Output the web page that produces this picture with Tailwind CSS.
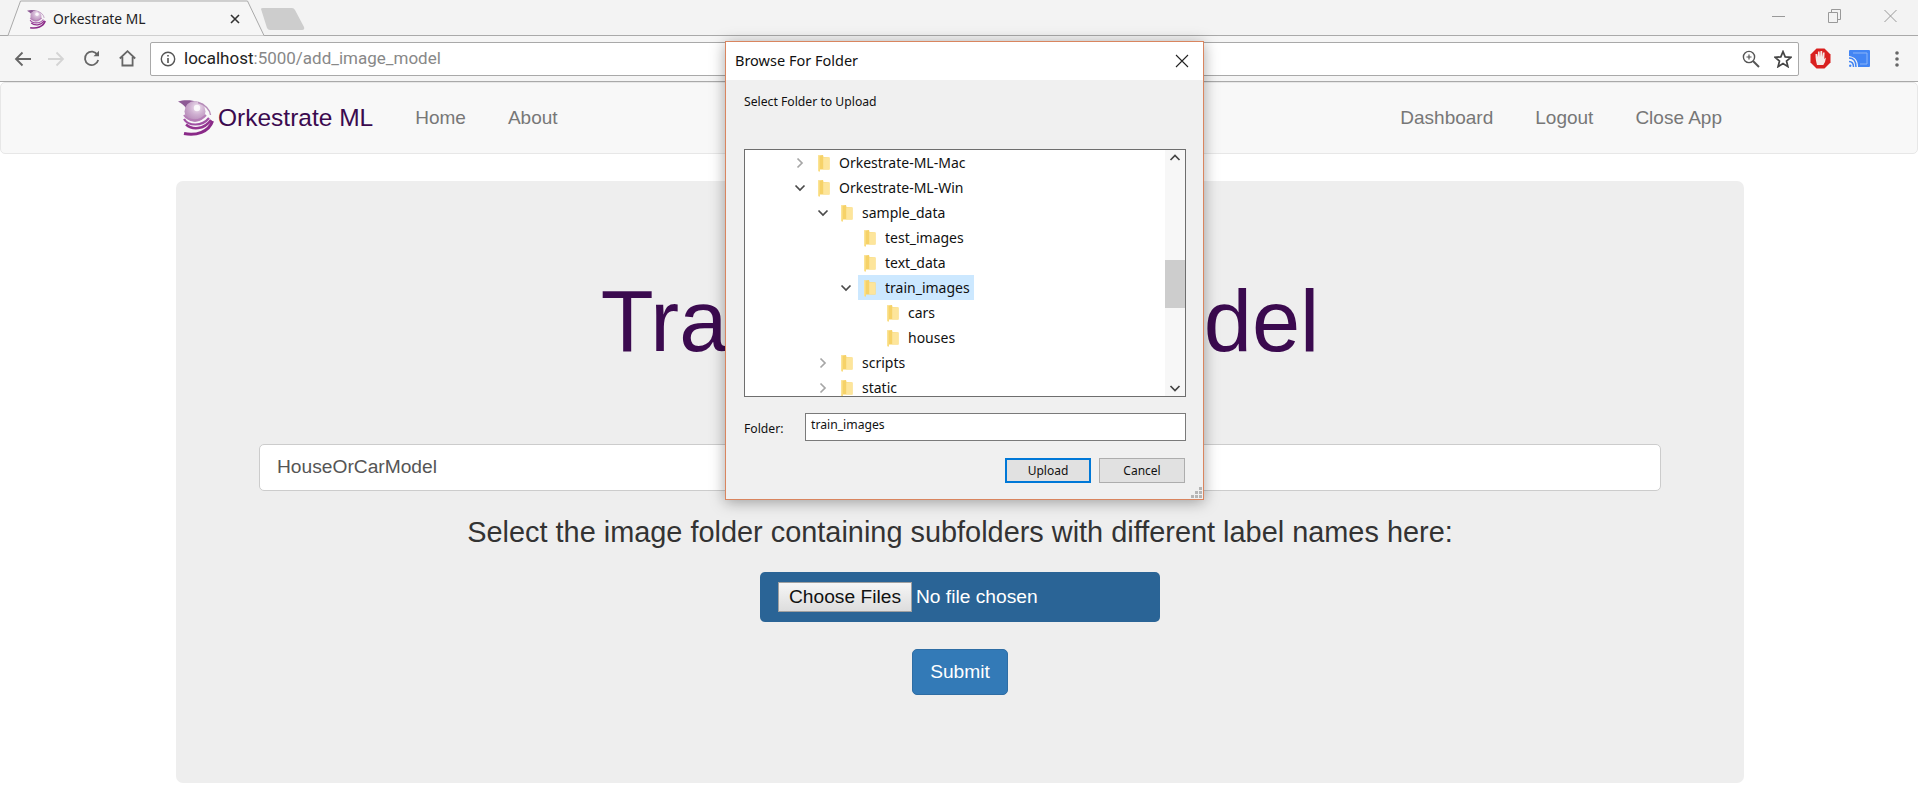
<!doctype html>
<html lang="en">
<head>
<meta charset="UTF-8">
<title>Orkestrate ML</title>
<script src="https://cdn.jsdelivr.net/npm/@tailwindcss/browser@4"></script>
</head>
<body class="bg-white font-['Liberation_Sans',Arial,sans-serif] overflow-hidden h-[804px] relative">

<svg width="0" height="0" class="absolute">
  <defs>
    <symbol id="folder" viewBox="0 0 13 18">
      <path d="M1 1.5 L6 1 L6.5 3 L12.5 3.5 L12.5 15.5 L3 15.5 L3 17.5 L1 17 Z" fill="#f6d268"/>
      <path d="M6.2 3.2 L12.5 3.6 L12.5 15.5 L6.2 15.5 Z" fill="#fde59b"/>
      <path d="M1 1.5 L2.5 1.3 L2.5 17.4 L1 17 Z" fill="#fbe394"/>
    </symbol>
    <symbol id="open" viewBox="0 0 16 16">
      <path d="M3.5 5.5 L8 10 L12.5 5.5" fill="none" stroke="#4a4a4a" stroke-width="1.7"/>
    </symbol>
    <symbol id="closed" viewBox="0 0 16 16">
      <path d="M5.5 3.5 L10 8 L5.5 12.5" fill="none" stroke="#a6a6a6" stroke-width="1.7"/>
    </symbol>
    <radialGradient id="logoGlow" cx="0.6" cy="0.3" r="0.7">
      <stop offset="0" stop-color="#f0e4f0"/>
      <stop offset="0.5" stop-color="#cfb0d1"/>
      <stop offset="1" stop-color="#b68ab8"/>
    </radialGradient>
    <symbol id="logo" viewBox="0 0 36 36">
      <path d="M0 1.5 C6 -0.5 14 0 20 2 C14 2 9 3 8 8 C6 5 3 3 0 1.5 Z" fill="#8d5a95"/>
      <circle cx="17" cy="11.5" r="10.5" fill="url(#logoGlow)"/>
      <circle cx="19" cy="8" r="3.2" fill="#fff" opacity="0.8"/>
      <path d="M20 2.5 C27 4 32 10 32.5 15" fill="none" stroke="#b58cb8" stroke-width="1.4"/>
      <path d="M6 15 C10 21 21 23 28 15" fill="none" stroke="#b57eb6" stroke-width="2"/>
      <path d="M6 19 C10 26 24 27 31 18" fill="none" stroke="#a04fa3" stroke-width="2.2"/>
      <path d="M8 24.5 C14 30 26 30 33 20" fill="none" stroke="#93348f" stroke-width="2.4"/>
      <path d="M6 33.5 C18 36 31 32 34.5 21" fill="none" stroke="#8a2a88" stroke-width="3"/>
    </symbol>
  </defs>
</svg>

<!-- tab strip -->
<div class="relative h-[36px] bg-[#f3f3f3] border-b border-[#a9a9a9]">
  <svg class="absolute left-0 top-0" width="320" height="36">
    <path d="M0 35.5 H8 L20.5 1 H247.5 L264 35.5" fill="#f6f6f6" stroke="#a9a9a9"/>
    <path d="M261 9 Q261 8 263 8 H292 Q294 8 295 10 L304 27 Q305 30 302 30 H270 Q268 30 267 28 Z" fill="#cdcdcd"/>
  </svg>
  <svg class="absolute left-[27px] top-[9px]" width="19" height="21"><use href="#logo"/></svg>
  <span class="absolute left-[53px] top-[9px] text-[13.8px] leading-[20px] text-[#222] font-['Noto_Sans',sans-serif]">Orkestrate ML</span>
  <svg class="absolute left-[230px] top-[14px]" width="10" height="10"><path d="M1 1 L9 9 M9 1 L1 9" stroke="#333" stroke-width="1.6"/></svg>
  <div class="absolute right-[21px] top-[9px] flex items-center gap-[43px]">
    <svg width="13" height="14"><path d="M0 7.5 H13" stroke="#999"/></svg>
    <svg width="13" height="14"><path d="M.5 3.5 H9.5 V13.5 H.5 Z M3.5 3.5 V.5 H12.5 V10.5 H9.5" fill="none" stroke="#999"/></svg>
    <svg width="13" height="14"><path d="M.5 1 L12.5 13 M12.5 1 L.5 13" stroke="#999"/></svg>
  </div>
</div>

<!-- toolbar -->
<div class="h-[46px] bg-[#f5f5f5] border-b border-[#a9a9a9] flex items-center">
  <div class="w-[150px] flex items-center shrink-0 pl-[14px]">
    <svg width="18" height="16" viewBox="0 0 18 16"><path d="M17 8 H2 M8.5 1.5 L2 8 L8.5 14.5" fill="none" stroke="#666" stroke-width="1.8"/></svg>
    <svg class="ml-[15px]" width="18" height="16" viewBox="0 0 18 16"><path d="M1 8 H16 M9.5 1.5 L16 8 L9.5 14.5" fill="none" stroke="#d4d4d4" stroke-width="1.8"/></svg>
    <svg class="ml-[18px]" width="17" height="17" viewBox="0 0 17 17"><path d="M14.5 5 A6.7 6.7 0 1 0 15.2 10" fill="none" stroke="#666" stroke-width="1.8"/><path d="M10.5 6.2 H16 V.8 Z" fill="#666"/></svg>
    <svg class="ml-[19px]" width="17" height="17" viewBox="0 0 17 17"><path d="M.8 8.5 L8.5 1.2 L16.2 8.5 M3.4 7 V15.5 H13.6 V7" fill="none" stroke="#666" stroke-width="1.8"/></svg>
  </div>
  <div class="w-[1649px] h-[34px] bg-white border border-[#a9a9a9] rounded-[2px] flex items-center shrink-0">
    <svg class="ml-[9px]" width="16" height="16" viewBox="0 0 16 16"><circle cx="8" cy="8" r="6.7" fill="none" stroke="#555" stroke-width="1.4"/><path d="M8 7 V12 M8 4 V5.6" stroke="#555" stroke-width="1.6"/></svg>
    <span class="ml-[8px] text-[17px] leading-none font-['Roboto',sans-serif] text-[#222]">localhost<span class="text-[#888]">:5000/add_image_model</span></span>
    <div class="ml-auto flex items-center gap-[14px] pr-[6px]">
      <svg width="18" height="18" viewBox="0 0 18 18"><circle cx="7" cy="7" r="5.6" fill="none" stroke="#555" stroke-width="1.4"/><path d="M11 11 L17 17" stroke="#555" stroke-width="2"/><path d="M4.5 7 H9.5 M7 4.5 V9.5" stroke="#555" stroke-width="1.2"/></svg>
      <svg width="18" height="18" viewBox="0 0 18 18"><path d="M9 1.6 L11.2 6.9 L16.9 7.3 L12.5 11 L13.9 16.6 L9 13.6 L4.1 16.6 L5.5 11 L1.1 7.3 L6.8 6.9 Z" fill="none" stroke="#444" stroke-width="1.7"/></svg>
    </div>
  </div>
  <svg class="ml-[11px]" width="21" height="21" viewBox="0 0 21 21"><path d="M6.5 0.5 H14.5 L20.5 6.5 V14.5 L14.5 20.5 H6.5 L.5 14.5 V6.5 Z" fill="#d9201f"/><path d="M7 17 C6 13 5.5 11 5.5 6 L7.2 6 L7.8 9 L8 3.5 H9.6 L10 9 L10.5 3 H12.2 L12.2 9 L13 4.5 H14.6 L14.3 11 L16 9.5 L15 14 L13.3 17 Z" fill="#f4e9e6"/></svg>
  <svg class="ml-[18px]" width="21" height="17" viewBox="0 0 21 17"><path d="M1 0 H20 Q21 0 21 1 V16 Q21 17 20 17 H9 C9 10 6 7 0 6 V1 Q0 0 1 0 Z" fill="#4285f4"/><path d="M0 8 C4 8 7 11 7 17 M0 11.5 C3 11.5 4.5 13.5 4.5 17" fill="none" stroke="#4285f4" stroke-width="1.5"/><circle cx="1.2" cy="15.8" r="1.2" fill="#4285f4"/><path d="M4 3 H18 V14 H11" fill="none" stroke="#8ab4f8" stroke-width="1"/></svg>
  <svg class="ml-[25px]" width="4" height="16" viewBox="0 0 4 16"><circle cx="2" cy="2" r="1.8" fill="#666"/><circle cx="2" cy="8" r="1.8" fill="#666"/><circle cx="2" cy="14" r="1.8" fill="#666"/></svg>
</div>

<!-- navbar -->
<nav class="h-[72px] bg-[#f8f8f8] border border-[#e7e7e7] rounded-[5px] flex items-center text-[19px] text-[#777]">
  <svg class="ml-[177px]" width="36" height="36"><use href="#logo"/></svg>
  <a class="ml-[4px] text-[24.5px] text-[#3b0a4f]">Orkestrate ML</a>
  <a class="ml-[42px]">Home</a>
  <a class="ml-[42px]">About</a>
  <div class="ml-auto mr-[195px] flex gap-[42px]">
    <a>Dashboard</a>
    <a>Logout</a>
    <a>Close App</a>
  </div>
</nav>

<!-- page -->
<main class="mt-[27px] ml-[176px] w-[1568px] h-[602px] bg-[#eeeeee] rounded-[7px] flex flex-col items-center">
  <h1 class="mt-[85px] h-[110px] text-[86.6px] leading-[110px] text-[#3b0a4f] text-center">Train Image Model</h1>
  <input class="mt-[68px] w-[1402px] h-[47px] shrink-0 bg-white border border-[#ccc] rounded-[5px] px-[17px] pb-[2px] text-[19.2px] text-[#555]" value="HouseOrCarModel">
  <p class="mt-[21px] text-[28.9px] leading-[40px] text-[#333]">Select the image folder containing subfolders with different label names here:</p>
  <div class="mt-[20px] w-[400px] h-[50px] bg-[#2a6496] rounded-[5px] flex items-center pl-[18px] text-[19.2px] text-white">
    <button class="w-[134px] h-[30px] bg-gradient-to-b from-[#f6f6f6] to-[#dddddd] border border-[#a0a0a0] text-[#111]">Choose Files</button>
    <span class="ml-[4px]">No file chosen</span>
  </div>
  <button class="mt-[27px] w-[96px] h-[46px] bg-[#337ab7] border border-[#2e6da4] rounded-[5px] text-[19.2px] text-white">Submit</button>
</main>

<!-- Browse For Folder dialog -->
<section class="absolute left-[725px] top-[41px] w-[479px] h-[459px] bg-[#f0f0f0] border border-[#d9855f] shadow-[0_2px_14px_rgba(0,0,0,0.35)] flex flex-col font-['Noto_Sans',sans-serif] text-[#111]">
  <header class="h-[38px] shrink-0 bg-white flex items-center justify-between pl-[9px] pr-[14px] text-[14.5px]">
    <span>Browse For Folder</span>
    <svg width="14" height="14"><path d="M1 1 L13 13 M13 1 L1 13" stroke="#222" stroke-width="1.1"/></svg>
  </header>
  <p class="ml-[18px] mt-[13px] h-[56px] text-[12.2px] leading-[18px]">Select Folder to Upload</p>

  <div class="ml-[18px] w-[442px] h-[248px] shrink-0 bg-white border border-[#6e6e6e] flex overflow-hidden text-[14px]">
    <ul class="flex-1">
      <li class="h-[25px] flex items-center pl-[47px]"><svg width="16" height="16"><use href="#closed"/></svg><svg class="ml-[9px]" width="13" height="18"><use href="#folder"/></svg><span class="ml-[9px]">Orkestrate-ML-Mac</span></li>
      <li class="h-[25px] flex items-center pl-[47px]"><svg width="16" height="16"><use href="#open"/></svg><svg class="ml-[9px]" width="13" height="18"><use href="#folder"/></svg><span class="ml-[9px]">Orkestrate-ML-Win</span></li>
      <li class="h-[25px] flex items-center pl-[70px]"><svg width="16" height="16"><use href="#open"/></svg><svg class="ml-[9px]" width="13" height="18"><use href="#folder"/></svg><span class="ml-[9px]">sample_data</span></li>
      <li class="h-[25px] flex items-center pl-[118px]"><svg width="13" height="18"><use href="#folder"/></svg><span class="ml-[9px]">test_images</span></li>
      <li class="h-[25px] flex items-center pl-[118px]"><svg width="13" height="18"><use href="#folder"/></svg><span class="ml-[9px]">text_data</span></li>
      <li class="h-[25px] flex items-center pl-[93px]"><svg width="16" height="16"><use href="#open"/></svg>
        <span class="ml-[4px] h-[25px] pl-[5px] pr-[4px] bg-[#cce8ff] flex items-center"><svg width="13" height="18"><use href="#folder"/></svg><span class="ml-[9px]">train_images</span></span></li>
      <li class="h-[25px] flex items-center pl-[141px]"><svg width="13" height="18"><use href="#folder"/></svg><span class="ml-[9px]">cars</span></li>
      <li class="h-[25px] flex items-center pl-[141px]"><svg width="13" height="18"><use href="#folder"/></svg><span class="ml-[9px]">houses</span></li>
      <li class="h-[25px] flex items-center pl-[70px]"><svg width="16" height="16"><use href="#closed"/></svg><svg class="ml-[9px]" width="13" height="18"><use href="#folder"/></svg><span class="ml-[9px]">scripts</span></li>
      <li class="h-[25px] flex items-center pl-[70px]"><svg width="16" height="16"><use href="#closed"/></svg><svg class="ml-[9px]" width="13" height="18"><use href="#folder"/></svg><span class="ml-[9px]">static</span></li>
    </ul>
    <div class="w-[20px] shrink-0 bg-[#f7f7f7] flex flex-col items-center">
      <svg class="mt-[2px]" width="12" height="12"><path d="M1.5 8 L6 3.5 L10.5 8" fill="none" stroke="#444" stroke-width="1.7"/></svg>
      <div class="mt-[96px] w-full h-[48px] bg-[#cdcdcd]"></div>
      <svg class="mt-auto mb-[2px]" width="12" height="12"><path d="M1.5 4 L6 8.5 L10.5 4" fill="none" stroke="#444" stroke-width="1.7"/></svg>
    </div>
  </div>

  <div class="ml-[18px] mt-[16px] flex">
    <span class="w-[61px] pt-[7px] text-[12.2px] leading-[18px]">Folder:</span>
    <div class="w-[381px] h-[28px] bg-white border border-[#7a7a7a] pl-[5px] text-[12.2px] leading-[22px]">train_images</div>
  </div>

  <div class="ml-[279px] mt-[17px] flex gap-[8px] text-[12px]">
    <button class="w-[86px] h-[25px] bg-[#e1e1e1] border-2 border-[#0078d7]">Upload</button>
    <button class="w-[86px] h-[25px] bg-[#e1e1e1] border border-[#adadad]">Cancel</button>
  </div>
  <svg class="absolute right-[1px] bottom-[1px]" width="11" height="11"><path d="M8 0 H11 V3 H8 Z M4 4 H7 V7 H4 Z M8 4 H11 V7 H8 Z M0 8 H3 V11 H0 Z M4 8 H7 V11 H4 Z M8 8 H11 V11 H8 Z" fill="#b5b5b5"/></svg>
</section>
</body>
</html>
